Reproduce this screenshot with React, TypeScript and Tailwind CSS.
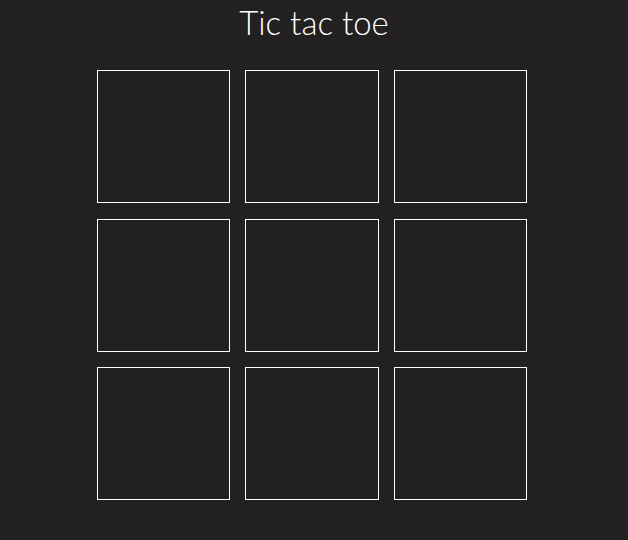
export default function App() {
  const cells = Array.from({ length: 9 })

  return (
    <div className="min-h-[540px] w-full bg-[#222021] text-white">
      <h1 className="pt-[2px] text-center font-['Lato',sans-serif] text-[33px] font-light leading-[41px] text-white">
        Tic tac toe
      </h1>
      <div className="ml-[97px] mt-[27px] grid w-[430px] grid-cols-3 gap-x-[15px] gap-y-[15.5px]">
        {cells.map((_, i) => (
          <button key={i} className="h-[133px] border border-white bg-transparent" />
        ))}
      </div>
    </div>
  )
}
